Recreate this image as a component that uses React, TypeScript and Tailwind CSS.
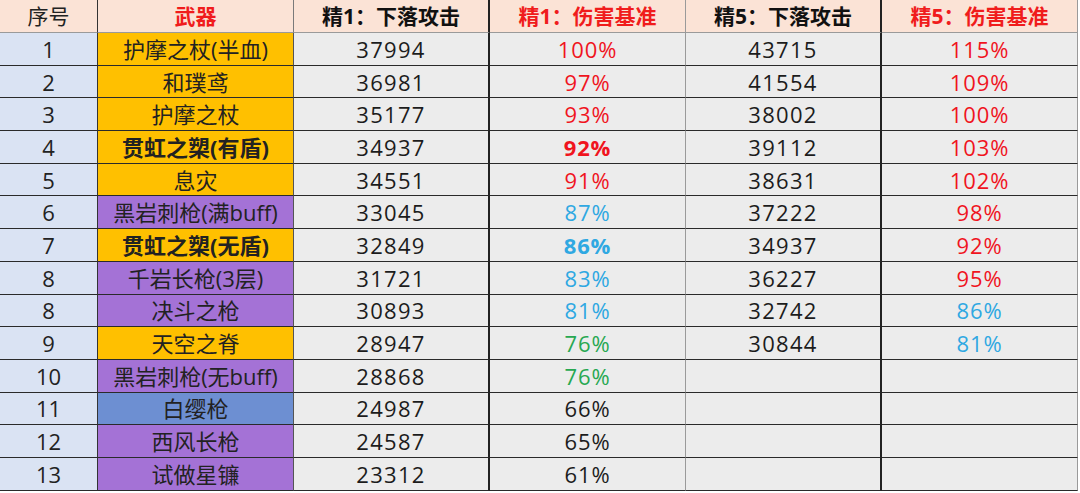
const GOLD = "bg-[#ffc000]";
const PURPLE = "bg-[#a472d6]";
const BLUE = "bg-[#6d8fd2]";

type Pct = { v: string; c: string; b?: boolean };

const RED = "text-[#f0141e]";
const SKY = "text-[#2fa8e2]";
const GREEN = "text-[#27a851]";
const DARK = "text-[#1c1c1c]";

type Row = {
  no: string;
  name: string;
  bg: string;
  bold?: boolean;
  a1: string;
  p1: Pct;
  a5?: string;
  p5?: Pct;
};

const rows: Row[] = [
  { no: "1", name: "护摩之杖(半血)", bg: GOLD, a1: "37994", p1: { v: "100%", c: RED }, a5: "43715", p5: { v: "115%", c: RED } },
  { no: "2", name: "和璞鸢", bg: GOLD, a1: "36981", p1: { v: "97%", c: RED }, a5: "41554", p5: { v: "109%", c: RED } },
  { no: "3", name: "护摩之杖", bg: GOLD, a1: "35177", p1: { v: "93%", c: RED }, a5: "38002", p5: { v: "100%", c: RED } },
  { no: "4", name: "贯虹之槊(有盾)", bg: GOLD, bold: true, a1: "34937", p1: { v: "92%", c: RED, b: true }, a5: "39112", p5: { v: "103%", c: RED } },
  { no: "5", name: "息灾", bg: GOLD, a1: "34551", p1: { v: "91%", c: RED }, a5: "38631", p5: { v: "102%", c: RED } },
  { no: "6", name: "黑岩刺枪(满buff)", bg: PURPLE, a1: "33045", p1: { v: "87%", c: SKY }, a5: "37222", p5: { v: "98%", c: RED } },
  { no: "7", name: "贯虹之槊(无盾)", bg: GOLD, bold: true, a1: "32849", p1: { v: "86%", c: SKY, b: true }, a5: "34937", p5: { v: "92%", c: RED } },
  { no: "8", name: "千岩长枪(3层)", bg: PURPLE, a1: "31721", p1: { v: "83%", c: SKY }, a5: "36227", p5: { v: "95%", c: RED } },
  { no: "8", name: "决斗之枪", bg: PURPLE, a1: "30893", p1: { v: "81%", c: SKY }, a5: "32742", p5: { v: "86%", c: SKY } },
  { no: "9", name: "天空之脊", bg: GOLD, a1: "28947", p1: { v: "76%", c: GREEN }, a5: "30844", p5: { v: "81%", c: SKY } },
  { no: "10", name: "黑岩刺枪(无buff)", bg: PURPLE, a1: "28868", p1: { v: "76%", c: GREEN } },
  { no: "11", name: "白缨枪", bg: BLUE, a1: "24987", p1: { v: "66%", c: DARK } },
  { no: "12", name: "西风长枪", bg: PURPLE, a1: "24587", p1: { v: "65%", c: DARK } },
  { no: "13", name: "试做星镰", bg: PURPLE, a1: "23312", p1: { v: "61%", c: DARK } },
];

const cell = "flex items-center justify-center h-full border-b border-[#2a2a2a]";

function Header() {
  const h = `${cell} bg-[#fbe3d6] border-b-[#9a9a9a] font-bold`;
  return (
    <div className="grid grid-cols-[98px_196px_196px_196px_196px_196px] h-[33px] text-[21px]">
      <div className={`${cell} bg-[#fbe3d6] border-b-[#9a9a9a] border-r border-r-[#333] text-[#222]`}>序号</div>
      <div className={`${h} border-r border-r-[#7a7a7a] text-[#f01c1c]`}>武器</div>
      <div className={`${h} border-r-2 border-r-[#222] text-[#111]`}>精1：下落攻击</div>
      <div className={`${h} border-r border-r-[#9a9a9a] text-[#f01c1c]`}>精1：伤害基准</div>
      <div className={`${h} border-r-2 border-r-[#222] text-[#111]`}>精5：下落攻击</div>
      <div className={`${h} border-r border-r-[#9a9a9a] text-[#f01c1c]`}>精5：伤害基准</div>
    </div>
  );
}

function DataRow({ r }: { r: Row }) {
  return (
    <div className="grid grid-cols-[98px_196px_196px_196px_196px_196px] h-[32.7px]">
      <div className={`${cell} bg-[#dae3f3] border-r border-r-[#333] text-[#222]`}>{r.no}</div>
      <div className={`${cell} ${r.bg} border-r border-r-[#555] text-[#222] ${r.bold ? "font-bold text-[#111]" : ""}`}>{r.name}</div>
      <div className={`${cell} bg-[#ececec] border-r-2 border-r-[#222] text-[#1c1c1c] tracking-[0.06em]`}>{r.a1}</div>
      <div className={`${cell} bg-[#ececec] border-r border-r-[#9a9a9a] tracking-[0.04em] ${r.p1.c} ${r.p1.b ? "font-bold" : ""}`}>{r.p1.v}</div>
      <div className={`${cell} bg-[#ececec] border-r-2 border-r-[#222] text-[#1c1c1c] tracking-[0.06em]`}>{r.a5 ?? ""}</div>
      <div className={`${cell} bg-[#ececec] border-r border-r-[#9a9a9a] tracking-[0.04em] ${r.p5?.c ?? ""}`}>{r.p5?.v ?? ""}</div>
    </div>
  );
}

export default function App() {
  return (
    <div
      className="w-[1080px] h-[493px] bg-white text-[22px] leading-none overflow-hidden"
      style={{ fontFamily: '"Open Sans", "Noto Sans CJK SC", sans-serif' }}
    >
      <Header />
      {rows.map((r, i) => (
        <DataRow key={i} r={r} />
      ))}
    </div>
  );
}
